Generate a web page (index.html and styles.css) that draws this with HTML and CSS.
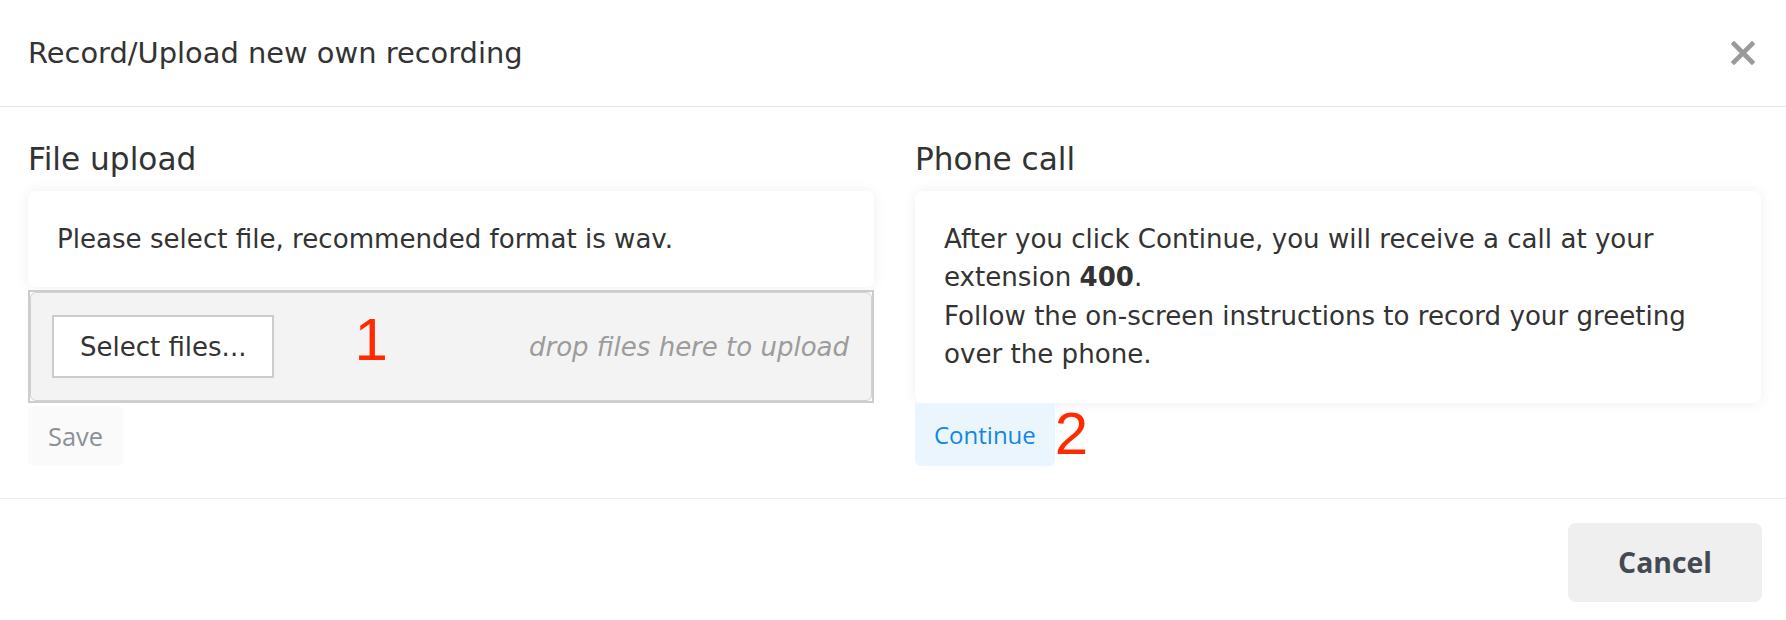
FILE: index.html
```html
<!DOCTYPE html>
<html lang="en">
<head>
<meta charset="utf-8">
<title>Record/Upload new own recording</title>
<link rel="stylesheet" href="styles.css">
</head>
<body>
<div class="dialog">
  <header class="dlg-header">
    <h1 class="dlg-title">Record/Upload new own recording</h1>
    <button class="close" aria-label="Close">
      <svg width="24" height="24" viewBox="0 0 24 24"><path d="M3 3 L21 21 M21 3 L3 21" stroke="#9a9a9a" stroke-width="4.6" stroke-linecap="square" fill="none"/></svg>
    </button>
  </header>
  <main class="dlg-body">
    <section class="col">
      <h2 class="col-title">File upload</h2>
      <div class="card">Please select file, recommended format is wav.</div>
      <div class="dropzone">
        <div class="dz-inner">
          <button class="select-btn">Select files...</button>
          <span class="mark mark-1">1</span>
          <span class="dz-hint">drop files here to upload</span>
        </div>
      </div>
      <div class="actions">
        <button class="btn btn-save">Save</button>
      </div>
    </section>
    <section class="col">
      <h2 class="col-title">Phone call</h2>
      <div class="card">After you click Continue, you will receive a call at your extension <b>400</b>.<br>Follow the on-screen instructions to record your greeting over the phone.</div>
      <div class="actions">
        <button class="btn btn-continue">Continue</button>
        <span class="mark mark-2">2</span>
      </div>
    </section>
  </main>
  <footer class="dlg-footer">
    <button class="btn btn-cancel">Cancel</button>
  </footer>
</div>
</body>
</html>
```
FILE: styles.css
```css
html, body {
  margin: 0;
  padding: 0;
  background: #ffffff;
}
body {
  font-family: "DejaVu Sans", Verdana, sans-serif;
  color: #333333;
}
button {
  font-family: inherit;
  cursor: pointer;
}
.dialog {
  width: 1786px;
}
.dlg-header {
  display: flex;
  align-items: center;
  justify-content: space-between;
  padding: 33px 31px 33px 28px;
  border-bottom: 1px solid #e8e8e8;
}
.dlg-title {
  margin: 0;
  font-size: 28.9px;
  line-height: 40px;
  font-weight: normal;
  color: #333333;
}
.close {
  border: 0;
  background: transparent;
  padding: 0;
  width: 24px;
  height: 24px;
  display: block;
}
.close svg {
  display: block;
}
.dlg-body {
  display: grid;
  grid-template-columns: 1fr 1fr;
  column-gap: 41px;
  padding: 34px 25px 32px 28px;
  align-items: start;
}
.col {
  display: flex;
  flex-direction: column;
  align-items: stretch;
}
.col-title {
  margin: 0 0 14px 0;
  font-size: 31.2px;
  line-height: 36px;
  font-weight: normal;
  color: #333333;
}
.card {
  background: #ffffff;
  border-radius: 8px;
  box-shadow: 0 0 14px rgba(0, 0, 0, 0.07);
  padding: 29px 29px;
  font-size: 26.1px;
  line-height: 38.4px;
  color: #333333;
}
.card b {
  font-weight: bold;
}
.dropzone {
  margin-top: 3px;
  border: 2px solid #cdcdcd;
  background: #fbfbfb;
}
.dz-inner {
  display: flex;
  align-items: center;
  background: #f3f3f3;
  border: 1px solid #d2d2d2;
  border-radius: 6px;
  padding: 22px 22px 22px 21px;
}
.select-btn {
  background: #ffffff;
  border: 2px solid #cccccc;
  border-radius: 0;
  height: 63px;
  padding: 0 26px;
  font-size: 26px;
  color: #333333;
}
.mark {
  font-family: "Liberation Sans", Arial, sans-serif;
  color: #ff2a00;
  font-size: 60px;
  line-height: 1;
}
.mark-1 {
  margin-left: 80px;
  margin-top: -14px;
}
.dz-hint {
  margin-left: auto;
  font-style: italic;
  font-size: 26px;
  color: #9c9c9c;
}
.actions {
  display: flex;
  align-items: center;
}
.btn {
  border: 0;
  font-family: "Open Sans", sans-serif;
}
.btn-save {
  margin-top: 3px;
  background: #fafafa;
  color: #8b9197;
  font-size: 25.4px;
  line-height: 34px;
  padding: 13px 20px;
  border-radius: 6px;
}
.btn-continue {
  background: #ebf5fe;
  color: #1289e0;
  font-size: 24px;
  line-height: 33px;
  padding: 15px 19px;
  border-radius: 0 0 6px 6px;
}
.mark-2 {
  margin-left: 0;
}
.dlg-footer {
  display: flex;
  justify-content: flex-end;
  border-top: 1px solid #ececec;
  padding: 24px 24px 18px 24px;
}
.btn-cancel {
  background: #efefef;
  color: #444a53;
  font-weight: 700;
  font-size: 28.4px;
  line-height: 39px;
  padding: 20px 50px;
  border-radius: 8px;
}
```
